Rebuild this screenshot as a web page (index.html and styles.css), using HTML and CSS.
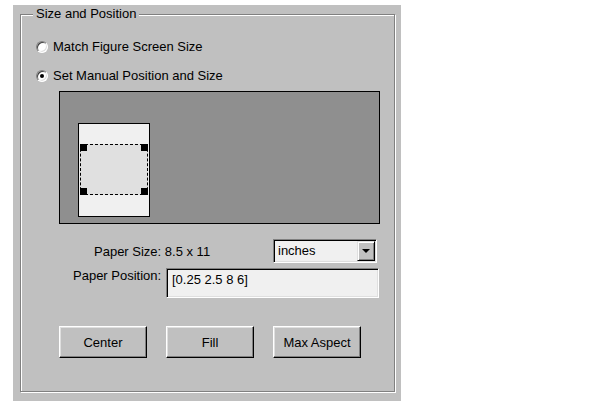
FILE: index.html
```html
<!DOCTYPE html>
<html>
<head>
<meta charset="utf-8">
<link rel="stylesheet" href="styles.css">
</head>
<body>
<div class="panel">
  <div class="group">
    <span class="legend">Size and Position</span>
    <div class="radio-row first">
      <span class="radio"></span>
      <span class="radio-label">Match Figure Screen Size</span>
    </div>
    <div class="radio-row second">
      <span class="radio checked"></span>
      <span class="radio-label">Set Manual Position and Size</span>
    </div>
    <div class="preview">
      <div class="paper">
        <div class="pos-rect">
          <span class="handle tl"></span>
          <span class="handle tr"></span>
          <span class="handle bl"></span>
          <span class="handle br"></span>
        </div>
      </div>
    </div>
    <div class="size-row">
      <span class="size-label">Paper Size: 8.5 x 11</span>
      <div class="dropdown">
        <span class="dropdown-text">inches</span>
        <span class="dropdown-btn"><span class="arrow"></span></span>
      </div>
    </div>
    <div class="pos-row">
      <span class="pos-label">Paper Position:</span>
      <div class="edit">[0.25 2.5 8 6]</div>
    </div>
    <div class="button-row">
      <div class="btn">Center</div>
      <div class="btn">Fill</div>
      <div class="btn">Max Aspect</div>
    </div>
  </div>
</div>
</body>
</html>
```
FILE: styles.css
```css
* { box-sizing: border-box; }
html, body { margin: 0; padding: 0; background: #ffffff; }
body {
  font-family: "Liberation Sans", Arial, sans-serif;
  font-size: 13px;
  line-height: 15px;
  color: #000;
}
.panel {
  margin: 5px 0 0 13px;
  width: 388px;
  height: 396px;
  background: #c0c0c0;
  padding: 9px 0 0 7px;
}
.group {
  position: relative;
  width: 375px;
  height: 378px;
  border: 1px solid #808080;
  box-shadow: inset 1px 1px 0 #ffffff, 1px 1px 0 #ffffff;
  padding: 24px 0 0 15px;
}
.legend {
  position: absolute;
  left: 12px;
  top: -9px;
  padding: 0 3px;
  background: #c0c0c0;
  white-space: nowrap;
}
.radio-row {
  display: flex;
  align-items: center;
  height: 15px;
}
.radio-row.second { margin-top: 14px; }
.radio {
  position: relative;
  width: 12px;
  height: 12px;
  border-radius: 50%;
  border: 1px solid;
  border-color: #808080 #ffffff #ffffff #808080;
  box-shadow: inset 1px 1px 0 #404040, inset -1px -1px 0 #dfdfdf;
  background: #ffffff;
  flex: 0 0 12px;
}
.radio.checked::after {
  content: "";
  position: absolute;
  left: 3px;
  top: 3px;
  width: 4px;
  height: 4px;
  border-radius: 50%;
  background: #000;
}
.radio-label { margin-left: 5px; white-space: nowrap; }
.preview {
  margin: 8px 0 0 23px;
  width: 321px;
  height: 133px;
  border: 1px solid #000;
  background: #8f8f8f;
  padding: 31px 0 0 18px;
}
.paper {
  position: relative;
  width: 72px;
  height: 94px;
  border: 1px solid #000;
  background: #f0f0f0;
}
.pos-rect {
  position: absolute;
  left: 1px;
  top: 20px;
  width: 68px;
  height: 51px;
  border: 1px dashed #000;
  background: #e0e0e0;
}
.handle {
  position: absolute;
  width: 7px;
  height: 7px;
  background: #000;
}
.handle.tl { left: -1px; top: -1px; }
.handle.tr { right: -1px; top: -1px; }
.handle.bl { left: -1px; bottom: -1px; }
.handle.br { right: -1px; bottom: -1px; }
.size-row {
  display: flex;
  align-items: center;
  margin-top: 15px;
  height: 24px;
}
.size-label {
  flex: 0 0 237px;
  padding-left: 58px;
  white-space: nowrap;
}
.dropdown {
  display: flex;
  align-items: stretch;
  width: 104px;
  height: 24px;
  border: 1px solid;
  border-color: #808080 #ffffff #ffffff #808080;
  box-shadow: inset 1px 1px 0 #000, inset -1px -1px 0 #dfdfdf;
  background: #f0f0f0;
  padding: 1px;
}
.dropdown-text {
  flex: 1;
  padding: 2px 0 0 3px;
}
.dropdown-btn {
  display: flex;
  align-items: center;
  justify-content: center;
  width: 18px;
  background: #c0c0c0;
  border: 1px solid;
  border-color: #dfdfdf #000 #000 #dfdfdf;
  box-shadow: inset 1px 1px 0 #ffffff, inset -1px -1px 0 #808080;
}
.arrow {
  width: 0;
  height: 0;
  border-left: 4px solid transparent;
  border-right: 4px solid transparent;
  border-top: 4px solid #000;
}
.pos-row {
  display: flex;
  align-items: flex-start;
  margin: 5px 0 0 37px;
}
.pos-label {
  width: 88px;
  white-space: nowrap;
}
.edit {
  margin-left: 5px;
  width: 213px;
  height: 30px;
  border: 1px solid;
  border-color: #808080 #ffffff #ffffff #808080;
  box-shadow: inset 1px 1px 0 #000, inset -1px -1px 0 #dfdfdf;
  background: #f0f0f0;
  padding: 3px 0 0 5px;
}
.button-row {
  display: flex;
  gap: 19px;
  margin: 28px 0 0 23px;
}
.btn {
  width: 88px;
  height: 32px;
  display: flex;
  align-items: center;
  justify-content: center;
  background: #c0c0c0;
  border: 1px solid;
  border-color: #ffffff #000 #000 #ffffff;
  box-shadow: inset -1px -1px 0 #808080, inset 1px 1px 0 #dfdfdf;
}
```
